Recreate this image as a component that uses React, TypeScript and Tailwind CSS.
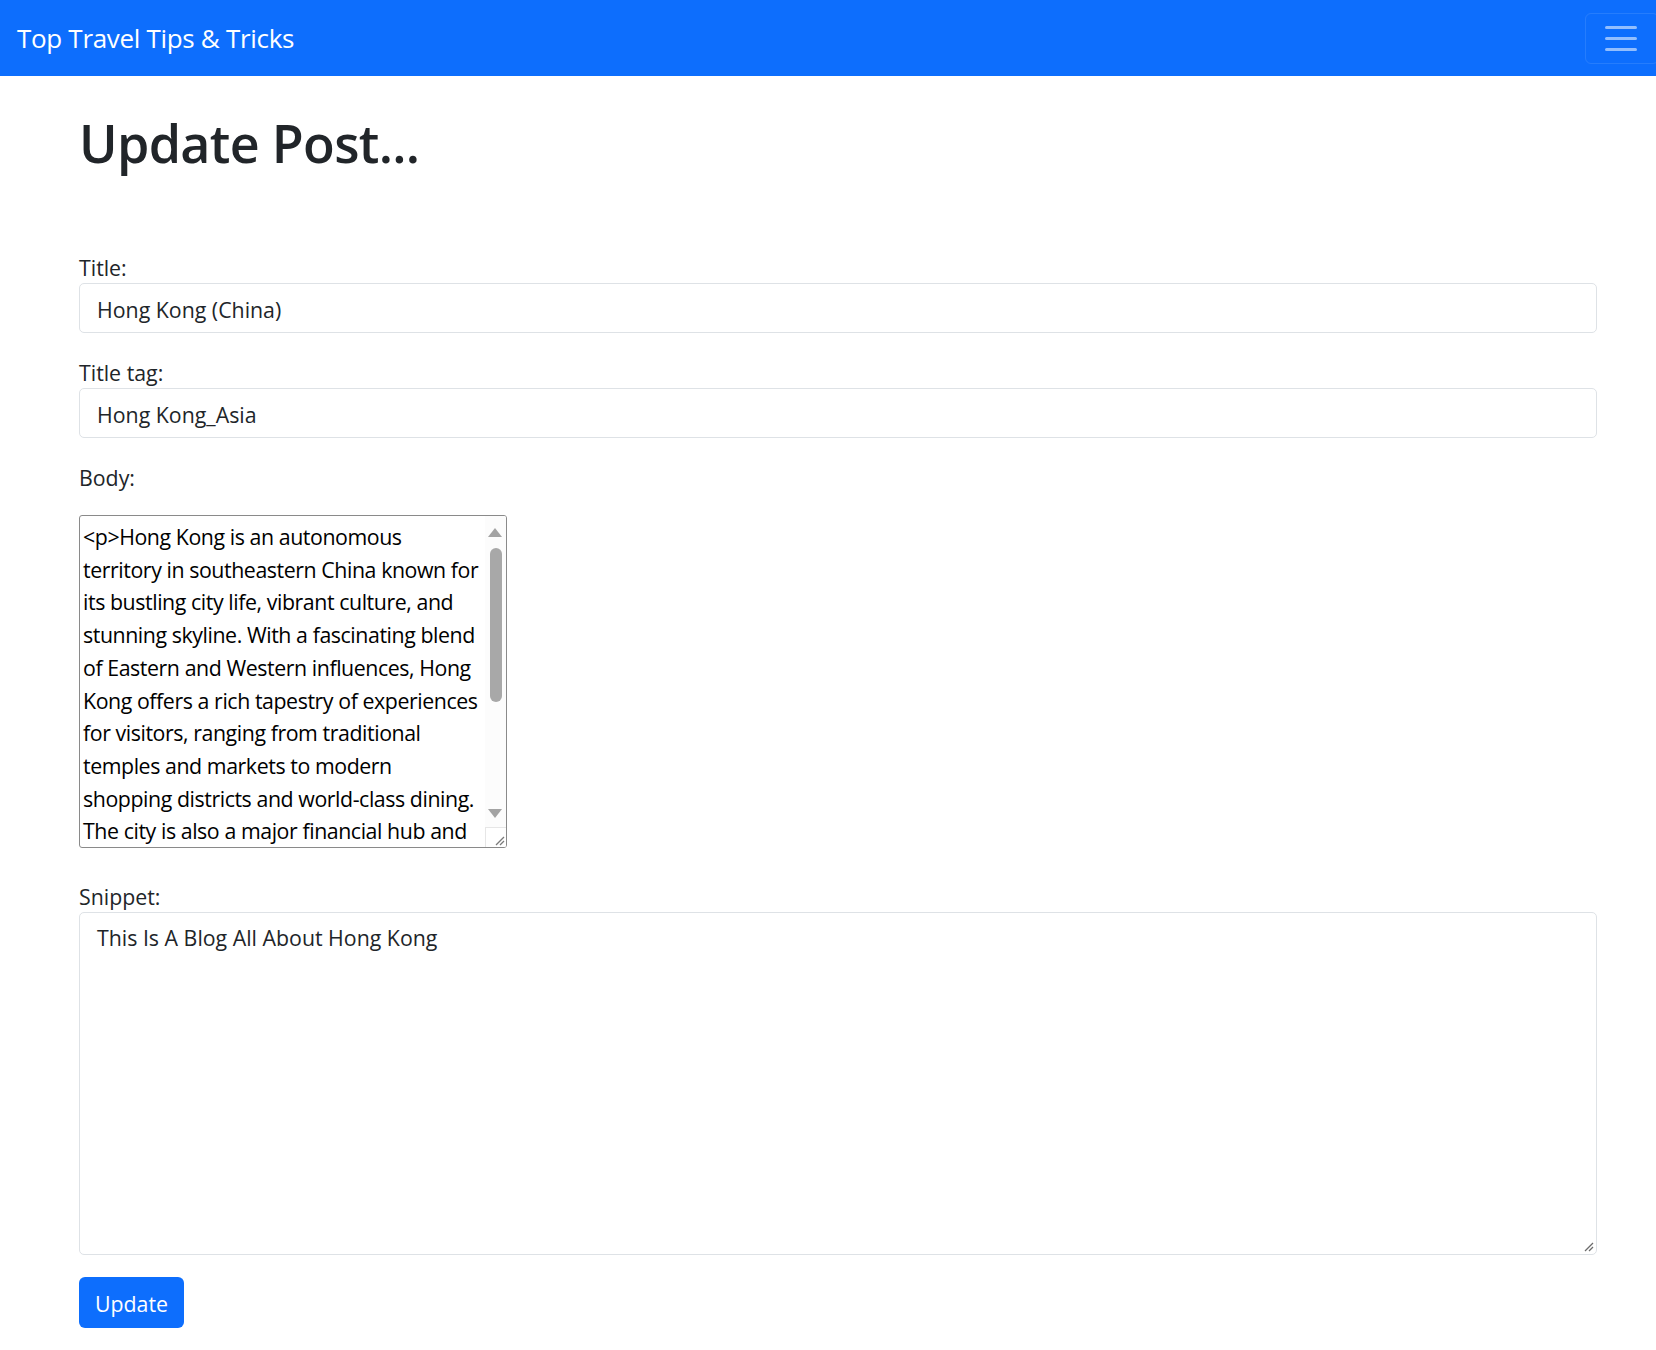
const font = "font-['Open_Sans','Noto_Sans',sans-serif]";

const bodyLines = [
  "<p>Hong Kong is an autonomous",
  "territory in southeastern China known for",
  "its bustling city life, vibrant culture, and",
  "stunning skyline. With a fascinating blend",
  "of Eastern and Western influences, Hong",
  "Kong offers a rich tapestry of experiences",
  "for visitors, ranging from traditional",
  "temples and markets to modern",
  "shopping districts and world-class dining.",
  "The city is also a major financial hub and",
];

function ResizeGrip({ color = "#7a7a7a" }: { color?: string }) {
  return (
    <svg width="10" height="10" viewBox="0 0 10 10">
      <line x1="1" y1="9" x2="9" y2="1" stroke={color} strokeWidth="1.2" />
      <line x1="5" y1="9" x2="9" y2="5" stroke={color} strokeWidth="1.2" />
    </svg>
  );
}

function Label({ children }: { children: React.ReactNode }) {
  return <div className="text-[21.33px] leading-[31px] text-[#212529]">{children}</div>;
}

function TextInput({ value }: { value: string }) {
  return (
    <div className="h-[50px] border border-[#dee2e6] rounded-[5px] px-[17px] pt-[3px] flex items-center text-[21.33px] text-[#212529]">
      {value}
    </div>
  );
}

export default function App() {
  return (
    <div className={`${font} bg-white min-h-[1350px]`}>
      {/* Navbar */}
      <nav className="h-[76px] bg-[#0d6efd] flex items-center justify-between pl-[17px] overflow-hidden">
        <span className="text-[26px] tracking-[-0.012em] text-white">Top Travel Tips &amp; Tricks</span>
        <div className="shrink-0 w-[74px] h-[51px] mr-[-3px] border border-white/10 rounded-[6px] flex flex-col items-center justify-center gap-[8px] pr-[2px]">
          <span className="block w-[32px] h-[3px] bg-[#92befe] rounded-full" />
          <span className="block w-[32px] h-[3px] bg-[#92befe] rounded-full" />
          <span className="block w-[32px] h-[3px] bg-[#92befe] rounded-full" />
        </div>
      </nav>

      <main className="pl-[79px] pr-[59px]">
        <h1 className="mt-[35px] text-[52px] leading-[64px] font-semibold tracking-[-0.013em] text-[#212529]">Update Post...</h1>

        <div className="mt-[77px]">
          <Label>Title:</Label>
          <TextInput value="Hong Kong (China)" />
        </div>

        <div className="mt-[24px]">
          <Label>Title tag:</Label>
          <TextInput value="Hong Kong_Asia" />
        </div>

        <div className="mt-[24px]">
          <Label>Body:</Label>
          <div className="mt-[22px] w-[428px] h-[333px] border border-[#8a8a8a] rounded-[3px] flex overflow-hidden">
            <div className="flex-1 overflow-hidden pl-[3px] pt-[5px] text-[21.33px] leading-[32.7px] tracking-[-0.02em] text-black">
              {bodyLines.map((l) => (
                <div key={l} className="whitespace-nowrap">{l}</div>
              ))}
            </div>
            <div className="w-[21px] shrink-0 flex flex-col bg-[#fcfcfc]">
              <div className="h-[32px] flex items-center justify-center pr-[2px]">
                <svg width="14" height="9" viewBox="0 0 14 9"><polygon points="7,0 14,9 0,9" fill="#a3a3a3" /></svg>
              </div>
              <div className="mx-auto w-[12px] h-[154px] rounded-full bg-[#a8a8a8] mr-[4px]" />
              <div className="flex-1" />
              <div className="h-[27px] flex items-center justify-center pr-[2px]">
                <svg width="14" height="9" viewBox="0 0 14 9"><polygon points="0,0 14,0 7,9" fill="#a3a3a3" /></svg>
              </div>
              <div className="h-[20px] border-t border-l border-[#e6e6e6] bg-white flex items-end justify-end pr-[1px] pb-[1px]">
                <ResizeGrip />
              </div>
            </div>
          </div>
        </div>

        <div className="mt-[33px]">
          <Label>Snippet:</Label>
          <div className="h-[343px] border border-[#dee2e6] rounded-[5px] px-[17px] pt-[9px] text-[21.33px] leading-[32px] text-[#212529] flex flex-col">
            <div className="flex-1">This Is A Blog All About Hong Kong</div>
            <div className="flex justify-end mr-[-15px] mb-[2px]">
              <ResizeGrip color="#6b6b6b" />
            </div>
          </div>
        </div>

        <button className="mt-[22px] w-[105px] h-[51px] bg-[#0d6efd] rounded-[6px] pt-[3px] text-white text-[21.33px] flex items-center justify-center">
          Update
        </button>
      </main>
    </div>
  );
}
